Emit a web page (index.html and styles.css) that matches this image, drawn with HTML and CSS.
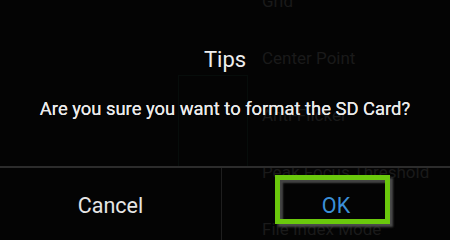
FILE: index.html
```html
<!DOCTYPE html>
<html>
<head>
<meta charset="utf-8">
<link rel="stylesheet" href="styles.css">
</head>
<body>
<div class="screen">
  <div class="backdrop">
    <div class="frame"></div>
    <ul class="menu">
      <li>Grid</li>
      <li>Center Point</li>
      <li>Anti-Flicker</li>
      <li>Peak Focus Threshold</li>
      <li>File Index Mode</li>
    </ul>
  </div>
  <div class="dialog">
    <div class="title">Tips</div>
    <div class="message">Are you sure you want to format the SD Card?</div>
    <div class="buttons">
      <div class="btn cancel">Cancel</div>
      <div class="btn ok">OK<span class="highlight"></span></div>
    </div>
  </div>
</div>
</body>
</html>
```
FILE: styles.css
```css
html, body {
  margin: 0;
  padding: 0;
  background: #030303;
}
.screen {
  position: relative;
  width: 450px;
  height: 240px;
  overflow: hidden;
  background: #040404;
  font-family: Roboto, "Liberation Sans", sans-serif;
}
.backdrop {
  position: absolute;
  inset: 0;
}
.frame {
  position: absolute;
  left: 178px;
  top: 75px;
  width: 68px;
  height: 92px;
  border: 1px solid #070d0b;
  border-bottom: none;
}
.menu {
  position: absolute;
  left: 262px;
  top: -14px;
  margin: 0;
  padding: 0;
  list-style: none;
  color: #1a1a1a;
  font-size: 17px;
}
.menu li {
  height: 57px;
  line-height: 30px;
}
.dialog {
  position: absolute;
  inset: 0;
  display: flex;
  flex-direction: column;
  align-items: stretch;
}
.title {
  margin-top: 48px;
  text-align: center;
  font-size: 22px;
  line-height: 24px;
  color: #eeeeee;
}
.message {
  margin-top: 27px;
  text-align: center;
  font-size: 18.4px;
  line-height: 20px;
  color: #ebebeb;
  text-shadow: 0 0 0.5px #ebebeb;
}
.buttons {
  margin-top: auto;
  height: 72px;
  border-top: 2px solid #2c2c2c;
  display: grid;
  grid-template-columns: 222px 1fr;
}
.btn {
  position: relative;
  text-align: center;
  font-size: 21.5px;
  line-height: 72px;
  padding-top: 2px;
}
.cancel {
  color: #e6e6e6;
  border-right: 1px solid #1e1e1e;
}
.ok {
  color: #3b8fd8;
}
.highlight {
  position: absolute;
  left: 53px;
  top: 7px;
  width: 105px;
  height: 39px;
  border: 5px solid #6ac80c;
  box-shadow: 3px 3px 2px #4a4a4a, inset 3px 3px 2px #444;
}
```
